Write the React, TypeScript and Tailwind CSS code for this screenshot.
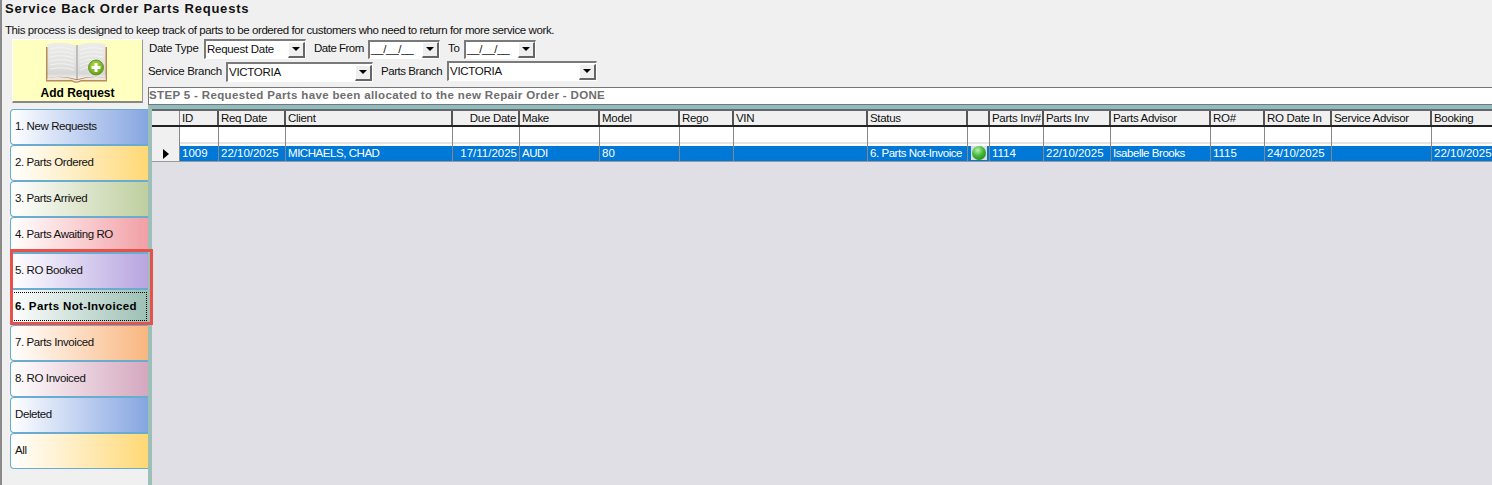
import React from "react";

const font = { fontFamily: '"Liberation Sans", Arial, sans-serif' };

const tabs = [
  ["1. New Requests", "to-[#86a5e0]", false],
  ["2. Parts Ordered", "to-[#ffd873]", false],
  ["3. Parts Arrived", "to-[#bfcf9f]", false],
  ["4. Parts Awaiting RO", "to-[#f0a0a6]", false],
  ["5. RO Booked", "to-[#b8a5e0]", false],
  ["6. Parts Not-Invoiced", "to-[#9cc0b4]", true],
  ["7. Parts Invoiced", "to-[#f8b67f]", false],
  ["8. RO Invoiced", "to-[#d4a8bf]", false],
  ["Deleted", "to-[#86a5e0]", false],
  ["All", "to-[#ffd873]", false],
] as const;

const cols: [string, number, string, boolean?][] = [
  ["ID", 39, "1009"],
  ["Req Date", 67, "22/10/2025"],
  ["Client", 167, "MICHAELS, CHAD"],
  ["Due Date", 67, "17/11/2025", true],
  ["Make", 80, "AUDI"],
  ["Model", 80, "80"],
  ["Rego", 54, ""],
  ["VIN", 134, ""],
  ["Status", 100, "6. Parts Not-Invoice"],
  ["", 22, "•"],
  ["Parts Inv#", 54, "1114"],
  ["Parts Inv", 67, "22/10/2025"],
  ["Parts Advisor", 100, "Isabelle Brooks"],
  ["RO#", 54, "1115"],
  ["RO Date In", 67, "24/10/2025"],
  ["Service Advisor", 100, ""],
  ["Booking", 67, "22/10/2025"],
];

function Arrow() {
  return <div className="w-0 h-0 border-l-[4px] border-r-[4px] border-t-[4px] border-l-transparent border-r-transparent border-t-black" />;
}

function DropBtn() {
  return (
    <div className="w-[17px] h-[16px] shrink-0 bg-[#efefef] border-t border-l border-t-white border-l-white border-b-2 border-r-2 border-b-[#666] border-r-[#666] flex items-center justify-center">
      <Arrow />
    </div>
  );
}

function Combo({ w, text, className = "" }: { w: string; text: string; className?: string }) {
  return (
    <div className={`${w} h-[20px] shrink-0 bg-white border-t-2 border-l-2 border-t-[#7a7a7a] border-l-[#7a7a7a] border-b border-r border-b-white border-r-white flex items-center justify-between ${className}`}>
      <span className="pl-[1px] text-[11.5px] leading-none text-[#111] whitespace-nowrap tracking-[-0.28px]">{text}</span>
      <DropBtn />
    </div>
  );
}

function DateBox({ w }: { w: string }) {
  return (
    <div className={`${w} h-[19px] shrink-0 bg-white border-t-2 border-l-2 border-t-[#7a7a7a] border-l-[#7a7a7a] border-b border-r border-b-white border-r-white flex items-center justify-between`}>
      <span className="pl-[1px] text-[11.5px] leading-none text-[#111] whitespace-nowrap">__/__/__</span>
      <DropBtn />
    </div>
  );
}

function Book() {
  return (
    <svg width="62" height="42" viewBox="0 0 62 42" className="block shrink-0 -ml-[1px]">
      <defs>
        <linearGradient id="pg" x1="0" y1="0" x2="0" y2="1">
          <stop offset="0" stopColor="#ececea" />
          <stop offset="0.55" stopColor="#e2e3e2" />
          <stop offset="0.85" stopColor="#d6d7d6" />
          <stop offset="1" stopColor="#f4f4f2" />
        </linearGradient>
        <radialGradient id="pl" cx="0.45" cy="0.35" r="0.7">
          <stop offset="0" stopColor="#b8dc4c" />
          <stop offset="1" stopColor="#5a9a10" />
        </radialGradient>
      </defs>
      <path d="M0 5 L0 38 L26 38 Q30 41 35 38 L61 38 L61 5 Z" fill="#b98a58" />
      <path d="M1.5 2 Q16 -1 30 3 L30 37 Q16 33 1.5 36 Z" fill="url(#pg)" />
      <path d="M32 3 Q46 -1 59.5 2 L59.5 36 Q46 33 32 37 Z" fill="url(#pg)" />
      <path d="M30 3 L32 3 L32 37 L30 37 Z" fill="#bdbdba" />
      <g stroke="#f6f6f5" strokeWidth="0.8" fill="none">
        <path d="M4 7 Q17 4 28 8M4 11 Q17 8 28 12M4 15 Q17 12 28 16M4 19 Q17 16 28 20M4 23 Q17 20 28 24M4 27 Q17 24 28 28" />
        <path d="M34 8 Q45 4 57 7M34 12 Q45 8 57 11M34 16 Q45 12 57 15M34 20 Q45 16 50 18M34 24 Q40 21 44 21M34 28 Q40 25 44 25" />
      </g>
      <path d="M1.5 36 Q16 33 30 38 L32 38 Q46 33 59.5 36 L60 38 L34 39 Q31 41 27 39 L1 38 Z" fill="#ece8e0" />
      <path d="M0 38 L26 38 Q30 41 35 38 L61 38 L61 39.5 L35 39.5 Q30 42 26 39.5 L0 39.5 Z" fill="#b98a58" />
      <circle cx="50" cy="25.5" r="7.5" fill="url(#pl)" stroke="#4e8a10" strokeWidth="0.8" />
      <path d="M48.5 21 H51.5 V24 H54.5 V27 H51.5 V30 H48.5 V27 H45.5 V24 H48.5 Z" fill="#fff" />
    </svg>
  );
}

function Dot() {
  return (
    <div className="w-[16px] h-[14px] bg-[#dcdcdc] flex items-center justify-center">
      <div className="w-[14px] h-[14px] rounded-full bg-[radial-gradient(circle_at_40%_30%,#b9f0b0_0%,#44b83a_45%,#0f7a12_100%)]" />
    </div>
  );
}

export default function App() {
  return (
    <div style={font} className="relative w-[1492px] h-[485px] overflow-hidden bg-[#f0f0f0] text-black border-l-2 border-l-[#8a8a8a]">
      <h1 className="ml-[3px] pt-[1px] h-[23px] text-[13px] leading-[16px] font-bold tracking-[0.79px] text-[#111]">
        Service Back Order Parts Requests
      </h1>
      <p className="ml-[3px] h-[16px] text-[11.5px] leading-[15px] text-[#111] tracking-[-0.41px]">
        This process is designed to keep track of parts to be ordered for customers who need to return for more service work.
      </p>
      <div className="flex h-[446px]">
        <div className="w-[146px] shrink-0 flex flex-col">
          <button className="ml-[10px] w-[131px] h-[64px] pt-[2px] bg-[#ffffc0] border-t border-l border-t-white border-l-white border-b-2 border-r border-b-[#888] border-r-[#999] flex flex-col items-center">
            <Book />
            <span className="mt-[3px] text-[12px] leading-[13px] font-bold">Add Request</span>
          </button>
          <div className="mt-[6px] ml-[8px] flex flex-col">
            {tabs.map(([label, to, active]) => (
              <div
                key={label}
                className={`h-[36px] w-[138px] border border-r-0 border-[#6aaccf] rounded-l-[4px] bg-gradient-to-r from-white ${to} flex items-center pl-[4px] text-[11.5px] whitespace-nowrap text-[#111] relative ${active ? "font-bold tracking-[0.36px] text-black" : "tracking-[-0.4px]"}`}
              >
                {label}
                {active && <div className="absolute left-[1px] right-[1px] top-[2px] bottom-[3px] border border-dotted border-black" />}
              </div>
            ))}
          </div>
        </div>
        <div className="flex-1 min-w-0 flex flex-col">
          <div className="flex items-center h-[20px] text-[11.5px] text-[#111] whitespace-nowrap tracking-[-0.3px]">
            <span className="ml-[1px] w-[55px]">Date Type</span>
            <Combo w="w-[102px]" text="Request Date" />
            <span className="ml-[8px] w-[54px] tracking-[-0.5px]">Date From</span>
            <DateBox w="w-[72px]" />
            <span className="ml-[8px] w-[16px]">To</span>
            <DateBox w="w-[72px]" />
          </div>
          <div className="flex items-center h-[20px] mt-[3px] text-[11.5px] text-[#111] whitespace-nowrap tracking-[-0.3px]">
            <span className="w-[78px]">Service Branch</span>
            <Combo w="w-[147px]" text="VICTORIA" />
            <span className="ml-[8px] w-[66px] tracking-[-0.45px]">Parts Branch</span>
            <Combo w="w-[150px]" text="VICTORIA" className="-translate-y-[1px]" />
          </div>
          <div className="mt-[5px] h-[18px] bg-white border-t border-b border-l border-[#777] flex items-center text-[11.5px] font-bold tracking-[0.35px] text-[#6e6e6e] whitespace-nowrap">
            STEP 5 - Requested Parts have been allocated to the new Repair Order - DONE
          </div>
          <div className="flex-1 min-h-0 border-t-[4px] border-t-[#8fbcc0] border-l-[4px] border-l-[#9cbfb8] bg-[#dfdfe5] overflow-hidden">
            <div className="border-t-2 border-t-[#666]">
              <div className="flex h-[16px] bg-[#f0f0f0] border-b-2 border-b-[#222]">
                <div className="w-[28px] shrink-0 border-r border-r-[#888]" />
                {cols.map(([h, w, , right]) => (
                  <div
                    key={h + w}
                    style={{ width: w }}
                    className={`shrink-0 border-r-2 border-r-[#555] px-[2px] text-[11.5px] leading-[14px] tracking-[-0.3px] text-[#111] whitespace-nowrap overflow-hidden ${right ? "text-right" : ""}`}
                  >
                    {h}
                  </div>
                ))}
              </div>
              <div className="flex h-[19px] bg-white">
                <div className="w-[28px] shrink-0 bg-[#f0f0f0] border-r border-r-[#888]" />
                {cols.map(([h, w]) => (
                  <div key={h + w} style={{ width: w }} className="shrink-0 border-r border-r-[#888] pt-[15px]">
                    <div className="h-[2px] bg-[#e4e4e4]" />
                  </div>
                ))}
              </div>
              <div className="flex h-[16px] bg-[#0078d7] border-b border-b-[#999]">
                <div className="w-[28px] shrink-0 bg-[#f0f0f0] border-r border-r-[#888] flex items-center justify-center">
                  <div className="w-0 h-0 border-t-[5px] border-b-[5px] border-l-[6px] border-t-transparent border-b-transparent border-l-black" />
                </div>
                {cols.map(([h, w, v, right]) => (
                  <div
                    key={h + w}
                    style={{ width: w }}
                    className={`shrink-0 border-r border-r-[#888] px-[2px] text-[11.5px] leading-[15px] text-white whitespace-nowrap overflow-hidden ${/[a-zA-Z]/.test(v) ? "tracking-[-0.45px]" : ""} ${right ? "text-right" : ""} ${v === "•" ? "flex justify-center px-0" : ""}`}
                  >
                    {v === "•" ? <Dot /> : v}
                  </div>
                ))}
              </div>
            </div>
          </div>
        </div>
      </div>
      <div className="absolute left-[8px] top-[249px] w-[143px] h-[76px] border-[3px] border-[#e8504a] pointer-events-none" />
    </div>
  );
}
